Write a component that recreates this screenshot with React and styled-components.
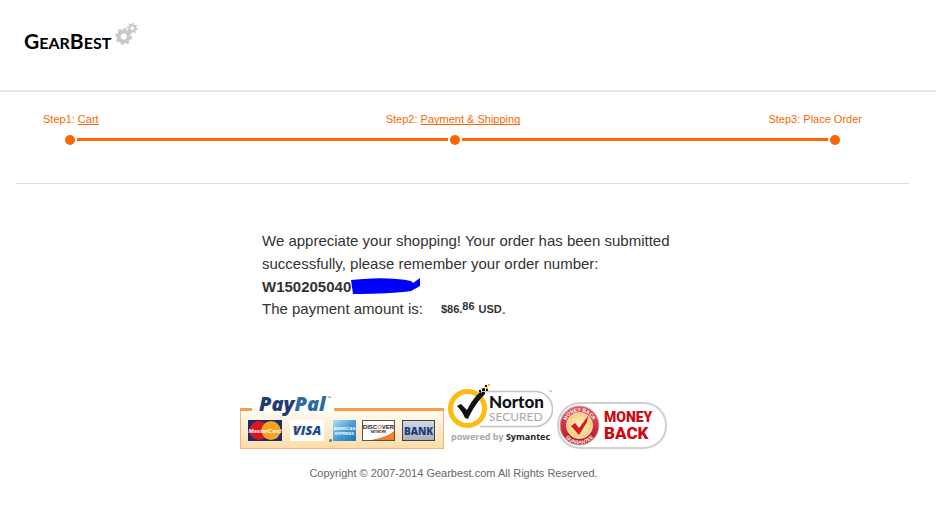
import React from 'react';
import styled, { createGlobalStyle } from 'styled-components';

const GlobalStyle = createGlobalStyle`
  body {
    margin: 0;
    background: #ffffff;
    color: #333333;
    font-family: "Liberation Sans", Arial, sans-serif;
  }
`;

const Header = styled.header`
  display: flex;
  align-items: center;
  height: 82px;
  padding: 0 24px 8px;
  border-bottom: 2px solid #e4e4e4;
`;

const Logo = styled.a`
  display: flex;
  align-items: center;
  color: #000000;
  text-decoration: none;
`;

const LogoSvg = styled.svg`
  display: block;
  width: 116px;
  height: 50px;
`;

const Content = styled.main`
  margin: 0 27px 0 16px;
`;

const Steps = styled.nav`
  padding: 19px 0 38px;
  border-bottom: 1px solid #dddddd;
`;

const StepLabels = styled.div`
  display: grid;
  grid-template-columns: 343fr 383fr auto;
  padding: 0 47px 0 27px;
  font-size: 11px;
  line-height: 16px;
  color: #ff6600;
`;

const StepLink = styled.a`
  color: #ff6600;
  text-decoration: underline 1px;
  text-decoration-skip-ink: none;
  text-underline-offset: 1px;
`;

const Track = styled.div`
  display: flex;
  align-items: center;
  gap: 2px;
  margin-top: 8px;
  padding: 0 69px 0 49px;
`;

const Dot = styled.span`
  width: 10px;
  height: 10px;
  border-radius: 50%;
  background: #ff6600;
`;

const Line = styled.span`
  flex: ${(props) => props.$grow};
  height: 3px;
  margin-bottom: 2px;
  background: #ff6600;
`;

const Message = styled.section`
  max-width: 401px;
  margin: 45px auto 0;
  font-size: 15px;
  line-height: 23px;
  white-space: nowrap;
`;

const Row = styled.div`
  display: flex;
  align-items: center;
  height: 22px;
`;

const Scribble = styled.svg`
  width: 70px;
  height: 18px;
`;

const Amount = styled.span`
  display: flex;
  align-items: center;
  margin-left: 18px;
  padding-top: 2px;
  font-size: 11px;
  font-weight: bold;
`;

const Cents = styled.span`
  padding: 0 4px 6px 0;
`;

const Footer = styled.footer`
  margin: 64px 18px 0 0;
  text-align: center;
`;

const Badges = styled.div`
  display: flex;
  justify-content: center;
  align-items: flex-end;
  gap: 4px;
`;

const Badge = styled.svg`
  display: block;
  flex: none;
`;

const Copyright = styled.p`
  margin: 16px 0 0;
  font-size: 11px;
  line-height: 16px;
  color: #666666;
`;

const Gear = ({ x, y, r, teeth, width }) => (
  <g transform={`translate(${x} ${y})`} stroke="#c8c8c8" fill="none">
    <circle r={r} strokeWidth={width} />
    <circle
      r={r + width / 2 + 0.5}
      strokeWidth="2"
      pathLength={teeth * 2}
      strokeDasharray="1 1"
    />
  </g>
);

const GearBestLogo = () => (
  <LogoSvg viewBox="0 0 116 50" role="img" aria-label="GearBest">
    <text x="0" y="33" fontFamily="Lato, sans-serif" fontWeight="bold" fontSize="21">
      G<tspan fontSize="16">EAR</tspan>B<tspan fontSize="16">EST</tspan>
    </text>
    <Gear x={99.7} y={20.5} r={5} teeth={8} width={4} />
    <Gear x={108.3} y={12.3} r={3} teeth={8} width={2} />
  </LogoSvg>
);

const PayPalBadge = () => (
  <Badge width="204" height="66" viewBox="0 -10 204 66" role="img" aria-label="PayPal">
    <defs>
      <linearGradient id="ppBox" x1="0" y1="0" x2="0" y2="1">
        <stop offset="0" stopColor="#fffdf8" />
        <stop offset="1" stopColor="#fcdca6" />
      </linearGradient>
      <linearGradient id="amex" x1="0" y1="0" x2="1" y2="1">
        <stop offset="0" stopColor="#b5def5" />
        <stop offset="0.5" stopColor="#4a9fd6" />
        <stop offset="1" stopColor="#1676bd" />
      </linearGradient>
      <linearGradient id="bank" x1="0" y1="0" x2="0" y2="1">
        <stop offset="0" stopColor="#d5d9df" />
        <stop offset="1" stopColor="#a9b0bb" />
      </linearGradient>
    </defs>
    <rect x="0.5" y="15.5" width="203" height="40" fill="url(#ppBox)" stroke="#fbb177" />
    <rect y="15" width="204" height="3" fill="#ff9a3e" />
    <rect x="12" y="0" width="82" height="19" fill="#ffffff" />
    <text x="19" y="18" fontFamily="Open Sans, sans-serif" fontWeight="800" fontStyle="italic" fontSize="20" fill="#213a70">
      Pay<tspan fill="#2a6ba4">Pal</tspan>
    </text>
    <text x="87" y="6" fontSize="4" fill="#213a70">™</text>

    <rect x="8" y="27" width="34" height="21" fill="#1a2c6b" />
    <circle cx="19" cy="37.5" r="9.5" fill="#d9161f" />
    <circle cx="31" cy="37.5" r="9.5" fill="#f8a51d" />
    <text x="25" y="40" textAnchor="middle" fontWeight="bold" fontStyle="italic" fontSize="6" fill="#ffffff">MasterCard</text>

    <rect x="50" y="27" width="34" height="21" fill="#ffffff" />
    <path d="M52 33h5l2 5z" fill="#f0a22e" />
    <text x="67" y="42" textAnchor="middle" fontFamily="Open Sans, sans-serif" fontWeight="800" fontStyle="italic" fontSize="13" fill="#1b4a8d">VISA</text>

    <circle cx="90.5" cy="47.5" r="1.5" fill="#2a8fa4" />
    <rect x="93" y="27" width="23" height="21" fill="url(#amex)" />
    <g fontWeight="bold" fontSize="4" fill="#ffffff" textAnchor="middle">
      <text x="104.5" y="37">AMERICAN</text>
      <text x="104.5" y="42">EXPRESS</text>
    </g>

    <rect x="122.5" y="27.5" width="32" height="20" fill="#ffffff" stroke="#555555" />
    <path d="M131 47Q148 44 154 38V47Z" fill="#f58220" />
    <g fontWeight="bold" fill="#222222" textAnchor="middle">
      <text x="138.5" y="36" fontSize="6">DISC<tspan fill="#f58220">O</tspan>VER</text>
      <text x="138.5" y="40" fontSize="3">NETWORK</text>
    </g>

    <rect x="162.5" y="27.5" width="32" height="20" fill="url(#bank)" stroke="#3c424c" />
    <text x="178.5" y="42" textAnchor="middle" fontFamily="Open Sans, sans-serif" fontWeight="800" fontSize="10" fill="#233f7c">BANK</text>
  </Badge>
);

const NortonBadge = () => (
  <Badge width="105" height="66" viewBox="0 0 105 66" role="img" aria-label="Norton Secured, powered by Symantec">
    <path d="M32 8.5H87A17.5 17.5 0 0 1 87 43.5H32" fill="#ffffff" stroke="#c4c4c4" strokeWidth="1.5" />
    <circle cx="19.5" cy="25.5" r="17" fill="#ffffff" stroke="#fdbb13" strokeWidth="5" />
    <path d="M9 23l4-2 6 6c4-8 8-13 13-18l5 2c-8 8-13 16-17 25l-3-1c-2-5-5-9-8-12z" fill="#111111" />
    <path d="M31 7h2v2h-2zM34 5h3v3h-3zM37 2h2v2h-2zM34 9h3v2h-3zM38 6h2v2h-2z" fill="#111111" />
    <path d="M33 5h2v1h-2zM38 4h2v2h-2zM40 1h2v2h-2z" fill="#fdbb13" />
    <text x="41" y="25" fontFamily="Lato, sans-serif" fontWeight="900" fontSize="17" fill="#111111">Norton</text>
    <text x="41" y="38" fontFamily="Lato, sans-serif" fontWeight="400" fontSize="12" fill="#a8a8a8">SECURED</text>
    <text x="100" y="10" fontSize="4" fill="#777777">™</text>
    <text x="3" y="57" fontFamily="Open Sans, sans-serif" fontWeight="700" fontSize="9" fill="#aaaaaa">
      powered by <tspan fill="#222222">Symantec</tspan>
    </text>
  </Badge>
);

const MoneyBackBadge = () => (
  <Badge width="110" height="47" viewBox="0 0 110 47" role="img" aria-label="Money Back">
    <defs>
      <radialGradient id="seal">
        <stop offset="0" stopColor="#fff6d0" />
        <stop offset="1" stopColor="#f5cc78" />
      </radialGradient>
      <linearGradient id="sealRing" x1="0" y1="0" x2="0" y2="1">
        <stop offset="0" stopColor="#e5585b" />
        <stop offset="1" stopColor="#b3141c" />
      </linearGradient>
      <path id="sealTop" d="M8 24A14.5 14.5 0 0 1 37 24" />
      <path id="sealBottom" d="M4.5 24A18 18 0 0 0 40.5 24" />
    </defs>
    <rect x="1" y="1" width="108" height="45" rx="22" fill="#ffffff" stroke="#d0d0d0" strokeWidth="2" />
    <circle cx="22.5" cy="23.5" r="19.5" fill="url(#sealRing)" stroke="#c9b0b0" />
    <circle cx="22.5" cy="23.5" r="13" fill="url(#seal)" stroke="#f8dddd" />
    <g fontWeight="bold" fontSize="5" fill="#ffffff" textAnchor="middle">
      <text><textPath href="#sealTop" startOffset="50%">MONEY BACK</textPath></text>
      <text><textPath href="#sealBottom" startOffset="50%">GUARANTEE</textPath></text>
    </g>
    <path d="M14 24l4-3 4 5 9-12-1 6-8 13z" fill="#d71920" />
    <g fontFamily="Roboto, sans-serif" fontWeight="900" fill="#cc0a12">
      <text x="47" y="20" fontSize="14">MONEY</text>
      <text x="47" y="37" fontSize="17">BACK</text>
    </g>
  </Badge>
);

export default function App() {
  return (
    <>
      <GlobalStyle />
      <Header>
        <Logo href="#home">
          <GearBestLogo />
        </Logo>
      </Header>
      <Content>
        <Steps aria-label="Checkout steps">
          <StepLabels>
            <span>Step1: <StepLink href="#cart">Cart</StepLink></span>
            <span>Step2: <StepLink href="#payment">Payment &amp; Shipping</StepLink></span>
            <span>Step3: Place Order</span>
          </StepLabels>
          <Track>
            <Dot />
            <Line $grow={371} />
            <Dot />
            <Line $grow={366} />
            <Dot />
          </Track>
        </Steps>
        <Message>
          <div>We appreciate your shopping! Your order has been submitted</div>
          <div>successfully, please remember your order number:</div>
          <Row>
            <strong>W150205040</strong>
            <Scribble viewBox="0 0 70 18" aria-hidden="true">
              <path d="M0 3L12 2Q40 0 60 4L62 6L69 1V9L60 14Q40 17 2 17Z" fill="#0000ff" />
            </Scribble>
          </Row>
          <Row>
            The payment amount is:
            <Amount>$86.<Cents>86</Cents>USD</Amount>.
          </Row>
        </Message>
        <Footer>
          <Badges>
            <PayPalBadge />
            <NortonBadge />
            <MoneyBackBadge />
          </Badges>
          <Copyright>Copyright © 2007-2014 Gearbest.com All Rights Reserved.</Copyright>
        </Footer>
      </Content>
    </>
  );
}
